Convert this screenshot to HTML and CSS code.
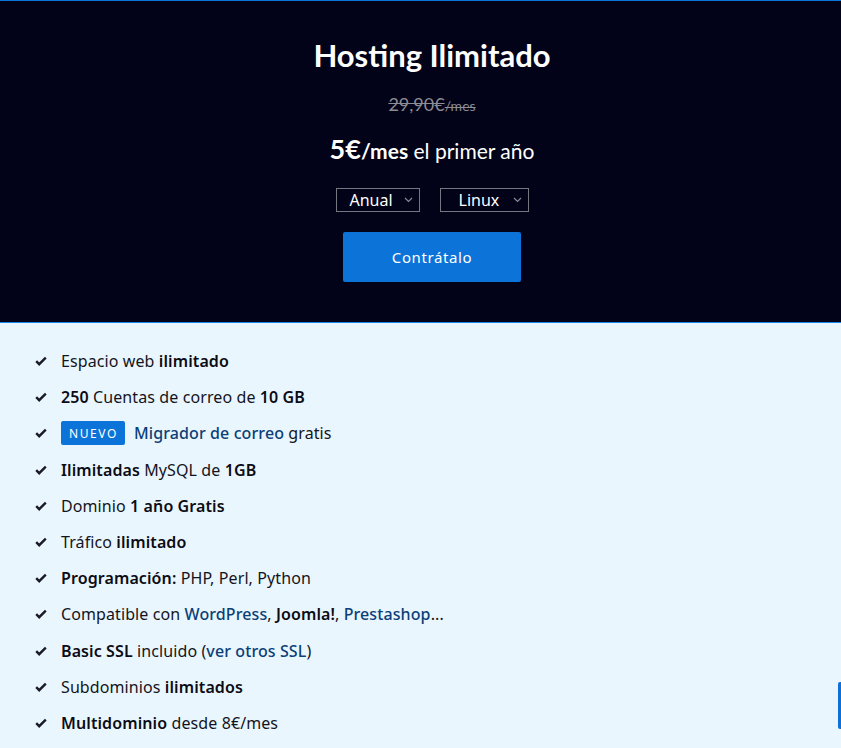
FILE: index.html
```html
<!DOCTYPE html>
<html lang="es">
<head>
<meta charset="utf-8">
<title>Hosting Ilimitado</title>
<link rel="stylesheet" href="styles.css">
</head>
<body>
<header class="plan">
  <h1 class="plan-title">Hosting Ilimitado</h1>
  <div class="old-price"><span class="old-num">29,90€</span><span class="old-unit">/mes</span></div>
  <div class="new-price"><span class="np-num">5€</span><span class="np-unit">/mes</span> el primer año</div>
  <div class="selects">
    <div class="sel sel-anual"><span>Anual</span><svg class="chev" width="9" height="6" viewBox="0 0 9 6"><path d="M1 1l3.5 3.5L8 1" fill="none" stroke="#8a8a95" stroke-width="1.2"/></svg></div>
    <div class="sel sel-linux"><span>Linux</span><svg class="chev" width="9" height="6" viewBox="0 0 9 6"><path d="M1 1l3.5 3.5L8 1" fill="none" stroke="#8a8a95" stroke-width="1.2"/></svg></div>
  </div>
  <a class="btn" href="#">Contrátalo</a>
</header>
<main class="features">
  <ul class="list">
    <li><svg class="check" viewBox="0 0 12 10"><path d="M1.2 5.2l3 3L10.8 1.6" fill="none" stroke="#1b1b26" stroke-width="2.4"/></svg><span>Espacio web <b>ilimitado</b></span></li>
    <li><svg class="check" viewBox="0 0 12 10"><path d="M1.2 5.2l3 3L10.8 1.6" fill="none" stroke="#1b1b26" stroke-width="2.4"/></svg><span><b>250</b> Cuentas de correo de <b>10 GB</b></span></li>
    <li><svg class="check" viewBox="0 0 12 10"><path d="M1.2 5.2l3 3L10.8 1.6" fill="none" stroke="#1b1b26" stroke-width="2.4"/></svg><span class="badge">NUEVO</span><span><a class="lnk" href="#">Migrador de correo</a> gratis</span></li>
    <li><svg class="check" viewBox="0 0 12 10"><path d="M1.2 5.2l3 3L10.8 1.6" fill="none" stroke="#1b1b26" stroke-width="2.4"/></svg><span><b>Ilimitadas</b> MySQL de <b>1GB</b></span></li>
    <li><svg class="check" viewBox="0 0 12 10"><path d="M1.2 5.2l3 3L10.8 1.6" fill="none" stroke="#1b1b26" stroke-width="2.4"/></svg><span>Dominio <b>1 año Gratis</b></span></li>
    <li><svg class="check" viewBox="0 0 12 10"><path d="M1.2 5.2l3 3L10.8 1.6" fill="none" stroke="#1b1b26" stroke-width="2.4"/></svg><span>Tráfico <b>ilimitado</b></span></li>
    <li><svg class="check" viewBox="0 0 12 10"><path d="M1.2 5.2l3 3L10.8 1.6" fill="none" stroke="#1b1b26" stroke-width="2.4"/></svg><span><b>Programación:</b> PHP, Perl, Python</span></li>
    <li><svg class="check" viewBox="0 0 12 10"><path d="M1.2 5.2l3 3L10.8 1.6" fill="none" stroke="#1b1b26" stroke-width="2.4"/></svg><span>Compatible con <a class="lnk-r" href="#">WordPress</a>, <b>Joomla!</b>, <a class="lnk-r" href="#">Prestashop</a>...</span></li>
    <li><svg class="check" viewBox="0 0 12 10"><path d="M1.2 5.2l3 3L10.8 1.6" fill="none" stroke="#1b1b26" stroke-width="2.4"/></svg><span><b>Basic SSL</b> incluido (<a class="lnk" href="#">ver otros SSL</a>)</span></li>
    <li><svg class="check" viewBox="0 0 12 10"><path d="M1.2 5.2l3 3L10.8 1.6" fill="none" stroke="#1b1b26" stroke-width="2.4"/></svg><span>Subdominios <b>ilimitados</b></span></li>
    <li><svg class="check" viewBox="0 0 12 10"><path d="M1.2 5.2l3 3L10.8 1.6" fill="none" stroke="#1b1b26" stroke-width="2.4"/></svg><span><b>Multidominio</b> desde 8€/mes</span></li>
  </ul>
</main>
<div class="side-tab"></div>
</body>
</html>
```
FILE: styles.css
```css
* { box-sizing: border-box; }
html, body { margin: 0; padding: 0; }
body {
  background: #eaf6fe;
  font-family: "Noto Sans", "Open Sans", sans-serif;
  color: #141420;
  height: 748px;
  overflow: hidden;
}
.plan {
  background: #020218;
  border-top: 1px solid #0c73d9;
  border-bottom: 1px solid #1a85ee;
  display: flex;
  flex-direction: column;
  align-items: center;
  padding: 34px 0 40px 23px;
  height: 323px;
}
.plan-title {
  margin: 0;
  font-family: Lato, sans-serif;
  font-weight: 700;
  font-size: 31px;
  line-height: 40px;
  color: #ffffff;
}
.old-price {
  margin-top: 19px;
  line-height: 20px;
  color: #8c8c94;
  text-decoration: line-through;
  font-family: Lato, sans-serif;
}
.old-num { font-size: 18px; }
.old-unit { font-size: 14px; }
.new-price {
  margin-top: 18px;
  line-height: 30px;
  font-family: Lato, sans-serif;
  font-size: 21px;
  color: #ffffff;
}
.np-num { font-size: 27px; font-weight: 700; }
.np-unit { font-size: 21px; font-weight: 700; }
.selects {
  margin-top: 22px;
  display: flex;
  gap: 20px;
}
.sel {
  height: 24px;
  border: 1px solid #76767e;
  display: flex;
  align-items: center;
  justify-content: space-between;
  color: #ffffff;
  font-size: 16px;
  padding: 0 6px 0 13px;
}
.sel-anual { width: 84px; }
.sel-linux { width: 89px; padding-left: 18px; }
.chev { display: block; }
.btn {
  margin-top: 20px;
  width: 178px;
  height: 50px;
  background: #0c73d9;
  border-radius: 2px;
  color: #ffffff;
  text-decoration: none;
  font-size: 15px;
  font-weight: 400;
  display: flex;
  align-items: center;
  justify-content: center;
  letter-spacing: 0.6px;
}
.features { padding: 20px 0 0 35px; }
.list {
  list-style: none;
  margin: 0;
  padding: 0;
}
.list li {
  display: flex;
  align-items: center;
  height: 36.2px;
  font-size: 16px;
  letter-spacing: 0.1px;
}
.check {
  width: 12px;
  height: 10px;
  margin-right: 14px;
  flex: none;
}
.list b { font-weight: 600; color: #0c0c14; }
.badge {
  background: #0c73d9;
  color: #ffffff;
  font-size: 12px;
  letter-spacing: 1.6px;
  height: 24px;
  padding: 0 7px 0 8px;
  display: flex;
  align-items: center;
  border-radius: 2px;
  margin-right: 9px;
}
.lnk { color: #0b3f78; text-decoration: none; font-weight: 500; }
.lnk-r { color: #0b3f78; text-decoration: none; font-weight: 500; }
.side-tab {
  position: fixed;
  right: 0;
  top: 682px;
  width: 3px;
  height: 47px;
  background: #0c70d8;
  border-radius: 2px 0 0 2px;
}
```
